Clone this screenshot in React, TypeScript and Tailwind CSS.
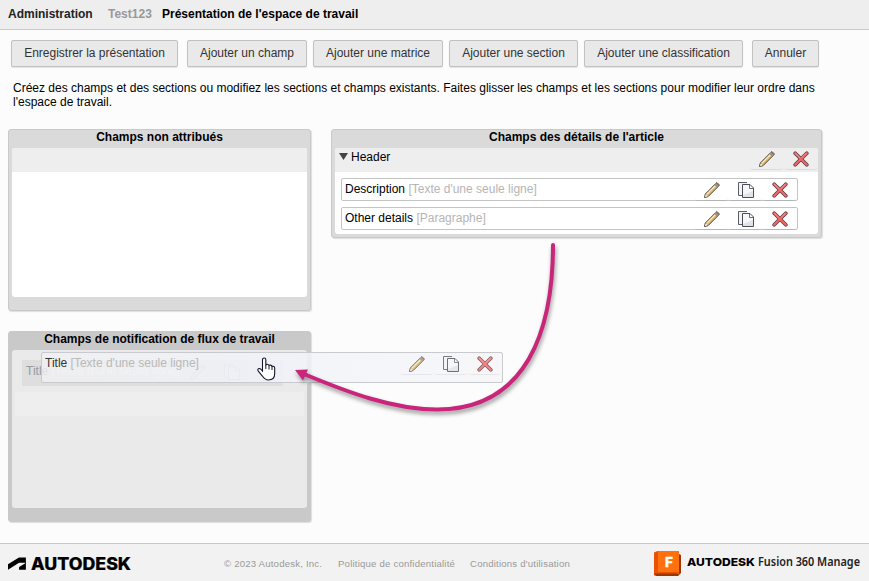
import { ReactNode } from "react"
import clsx from "clsx"

const actions = [
    { label: "Enregistrer la présentation", size: "w-[167px] mr-[9px]" },
    { label: "Ajouter un champ", size: "w-[120px] mr-[6px]" },
    { label: "Ajouter une matrice", size: "w-[130px] mr-[6px]" },
    { label: "Ajouter une section", size: "w-[129px] mr-[6px]" },
    { label: "Ajouter une classification", size: "w-[159px] mr-[9px]" },
    { label: "Annuler", size: "w-[67px]" },
]

const fields = [
    { name: "Description", type: "[Texte d'une seule ligne]" },
    { name: "Other details", type: "[Paragraphe]" },
]

function PencilIcon() {
    return (
        <svg className="size-4" viewBox="0 0 16 16">
            <path d="M0.5 15.5 1.3 12 11.8 1.5 13 0.6 15.4 3 14.5 4.2 4 14.7Z" fill="#dfb568" stroke="#4a4744" strokeWidth="1" />
            <path d="M2.7 12.4 11.6 3.5" stroke="#fbeec8" strokeWidth="1.1" />
            <path d="M1 15 1.7 12.4 3.6 14.3Z" fill="#f8f8f8" />
            <path d="M10.6 3 11.9 1.7 14.3 4.1 13 5.4Z" fill="#8b9299" />
            <path d="M12.1 1.6 13 1.1 14.9 3 14.4 3.9Z" fill="#9c665f" />
        </svg>
    )
}

function CopyIcon() {
    return (
        <svg className="size-4" viewBox="0 0 16 16">
            <path d="M0.5 0.5H9.5V13.5H0.5Z" fill="#f2f3f6" />
            <path d="M9 0.5H0.5V13.5H4" fill="none" stroke="#5b5e66" />
            <path d="M4.5 2.5H12L15.5 6V15.5H4.5Z" fill="#e2e3ea" stroke="#4b4e57" />
            <path d="M5 3H11V7H15V9L5 13Z" fill="#f7f7fa" />
            <path d="M11.5 3V6.5H15" fill="#fff" stroke="#696c75" />
        </svg>
    )
}

function DeleteIcon() {
    return (
        <svg className="size-4" viewBox="0 0 16 16">
            <path d="M2.2 2.2 13.8 13.8M13.8 2.2 2.2 13.8" stroke="#5f3f43" strokeWidth="3.7" strokeLinecap="round" />
            <path d="M2.2 2.2 13.8 13.8M13.8 2.2 2.2 13.8" stroke="#f26868" strokeWidth="2.1" strokeLinecap="round" />
            <path d="M2.2 2 7 6.8M13.4 2 9 6.4" stroke="#f8a3a3" strokeWidth="0.7" />
        </svg>
    )
}

function IconButton({ children }: { children: ReactNode }) {
    return (
        <button className="flex h-5 w-[33px] items-start justify-center rounded-b-[3px] border-b border-black/8 pt-px">
            {children}
        </button>
    )
}

function RowIcons({ copy = true }: { copy?: boolean }) {
    return (
        <div className="flex gap-px">
            <IconButton><PencilIcon /></IconButton>
            {copy && <IconButton><CopyIcon /></IconButton>}
            <IconButton><DeleteIcon /></IconButton>
        </div>
    )
}

type PanelProps = {
    title: string
    className: string
    bodyClass: string
    children?: ReactNode
}

function Panel({ title, className, bodyClass, children }: PanelProps) {
    return (
        <section className={clsx("rounded-[3px] border px-[3px] shadow-[1px_1px_1px_rgba(0,0,0,0.12)]", className)}>
            <h2 className="h-[18px] text-center font-bold leading-[15px]">{title}</h2>
            <div className={clsx("rounded-[3px]", bodyClass)}>{children}</div>
        </section>
    )
}

function DraggedField() {
    return (
        <div className="absolute left-[41px] top-[352px] flex h-[31px] w-[462px] justify-between rounded-[2px] border border-[#c9cacd] bg-linear-to-r from-[#f1f1f3]/80 via-[#f1f3f9]/85 to-[#f6f6f9]/85 pl-[3px] pr-px">
            <p className="pt-[3px] leading-[14px] text-[#333]">
                Title <span className="text-[#b9b9b9]">[Texte d'une seule ligne]</span>
            </p>
            <div className="pt-[2px] opacity-80"><RowIcons /></div>
        </div>
    )
}

function HandCursor() {
    return (
        <svg className="absolute left-[257px] top-[357px] h-[24px] w-[19px]" viewBox="0 0 19 24">
            <path
                d="M5.5 14V2.8C5.5 .3 8.8 .3 8.8 2.8V8.5C8.8 6.8 12 6.8 12 9C12 7.5 15 7.8 15 10C15 8.8 17.7 9 17.7 11.3V16.5C17.7 20.5 15.3 23 11.4 23C8.2 23 6.8 21.2 5.2 18.8L1.3 14.1C-.3 11.7 2.5 10.7 4 12.4Z"
                fill="#fff"
                stroke="#15152a"
                strokeWidth="1.1"
            />
            <path d="M8.8 8V12M12 9V12.5M15 10V13" stroke="#15152a" strokeWidth="1" />
        </svg>
    )
}

function DragArrow() {
    return (
        <svg className="pointer-events-none absolute left-[280px] top-[235px] h-[190px] w-[290px] drop-shadow-[1px_3px_2px_rgba(0,0,0,0.4)]" viewBox="280 235 290 190">
            <path d="M553 245C553 330 527 409.5 437 409.5C393 409.5 347 392 304 374" fill="none" stroke="#c9267b" strokeWidth="4" strokeLinecap="round" />
            <path d="M295 370 308 369.5 303 380.5Z" fill="#c9267b" />
        </svg>
    )
}

function Footer() {
    return (
        <footer className="flex h-[38px] border-t border-[#c9c9c9] bg-[#f2f2f2]">
            <svg className="h-[37px] w-[224px]" viewBox="0 0 224 37">
                <path
                    transform="translate(8 10.6) scale(.745)"
                    d="M.1 20.2 14.8 11.1H22.5C22.9 11.1 23.1 11.7 22.7 11.9L15.5 16.2C15 16.5 14.8 17 14.8 17.5V20.2H24V4.4C24 4 23.8 3.8 23.4 3.8H14.7L0 12.9V20.2Z"
                />
                <text x="31" y="25.7" textLength="100" lengthAdjust="spacingAndGlyphs" fontFamily="Inter" fontSize="16.8" fontWeight="800" stroke="#000" strokeWidth="0.2">AUTODESK</text>
            </svg>
            <div className="flex pt-[13px] text-[9.6px] leading-[14px] tracking-[0.2px] text-[#999]">
                <span className="w-[114px]">© 2023 Autodesk, Inc.</span>
                <span className="w-[132px]">Politique de confidentialité</span>
                <span>Conditions d'utilisation</span>
            </div>
            <svg className="ml-auto h-[37px] w-[215px]" viewBox="654 0 215 37">
                <path d="M654 8.5 657.5 7H679V29L674.5 31.5H654Z" fill="#e95200" />
                <path d="M679 10 681 11V29L678 32H656L654 29.5H679Z" fill="#9c3900" />
                <path d="M658 7H679V28H658Z" fill="#ff7110" />
                <text x="665" y="22.8" fontFamily="Inter" fontSize="13.5" fontWeight="800" fill="#fff" stroke="#fff" strokeWidth="0.3">F</text>
                <text x="687" y="21.5" textLength="68" lengthAdjust="spacingAndGlyphs" fontFamily="Inter" fontSize="11" fontWeight="800">AUTODESK</text>
                <text x="758" y="21.5" textLength="102" lengthAdjust="spacingAndGlyphs" fontFamily="Noto Sans" fontSize="12" fontWeight="600" fill="#222">Fusion 360 Manage</text>
            </svg>
        </footer>
    )
}

export default function App() {
    return (
        <div className="relative flex h-[581px] w-[869px] flex-col overflow-hidden bg-[#fcfcfc] font-['Liberation_Sans',Arial,sans-serif] text-[12px] text-black">
            <header className="flex h-[30px] shrink-0 border-b border-[#c9c9c9] bg-[#eee] pl-2 pt-[7px] font-bold leading-[14px]">
                <span className="w-[100px] text-[#222]">Administration</span>
                <span className="w-[54px] text-[#999]">Test123</span>
                <h1>Présentation de l'espace de travail</h1>
            </header>

            <nav className="flex pl-[11px] pt-[10px]">
                {actions.map(action => (
                    <button
                        key={action.label}
                        className={clsx("h-[27px] whitespace-nowrap rounded-[2px] border border-[#c1c1c1] bg-[#e9e9e9] pb-[2px] text-[#333] shadow-[0_1px_1px_rgba(0,0,0,0.1)]", action.size)}
                    >
                        {action.label}
                    </button>
                ))}
            </nav>

            <p className="ml-[13px] mt-[14px] h-[48px] w-[820px] leading-[14px]">
                Créez des champs et des sections ou modifiez les sections et champs existants. Faites glisser les champs et les sections pour modifier leur ordre dans l'espace de travail.
            </p>

            <main className="flex grow items-start gap-5 pl-2">
                <div className="flex w-[303px] flex-col gap-5">
                    <Panel title="Champs non attribués" className="h-[182px] border-[#c9c9c9] bg-[#dadada]" bodyClass="h-[149px] overflow-hidden bg-white">
                        <div className="h-6 bg-[#eee]" />
                    </Panel>
                    <Panel title="Champs de notification de flux de travail" className="h-[191px] border-[#c9c9c9] bg-[#c9c9c9]" bodyClass="h-[158px] bg-[#eaeaea] pt-[10px]">
                        <div className="ml-[10px] flex h-[26px] w-[261px] justify-between bg-[#dedede] pl-1 pr-[43px] pt-1 text-[#999]">
                            <p className="leading-[14px]">Title <span className="text-[#f4f4f4]">[Texte d'une seule ligne]</span></p>
                            <div className="flex gap-[18px] opacity-25">
                                <PencilIcon />
                                <CopyIcon />
                            </div>
                        </div>
                        <div className="mx-[3px] mt-[6px] h-6 bg-[#eee]" />
                    </Panel>
                </div>

                <Panel title="Champs des détails de l'article" className="h-[109px] w-[491px] border-[#c9c9c9] bg-[#dadada]" bodyClass="h-[86px] overflow-hidden bg-white">
                    <div className="flex h-6 justify-between bg-[#eee] pl-1 pr-px pt-[2px]">
                        <div className="flex gap-[3px]">
                            <svg className="mt-[3px] h-[7px] w-[9px]" viewBox="0 0 9 7"><path d="M0 0H9L4.5 7Z" fill="#444" /></svg>
                            <span className="leading-[14px]">Header</span>
                        </div>
                        <RowIcons copy={false} />
                    </div>
                    <ul className="flex flex-col gap-[6px] pl-[6px] pt-[6px]">
                        {fields.map(field => (
                            <li key={field.name} className="flex h-[23px] w-[457px] justify-between rounded-[2px] border border-[#c4c4c4] pl-[3px] pt-[2px]">
                                <p className="pt-px leading-[14px]">
                                    {field.name} <span className="text-[#b5b5b5]">{field.type}</span>
                                </p>
                                <div className="pr-px"><RowIcons /></div>
                            </li>
                        ))}
                    </ul>
                </Panel>
            </main>

            <Footer />
            <DraggedField />
            <DragArrow />
            <HandCursor />
        </div>
    )
}
